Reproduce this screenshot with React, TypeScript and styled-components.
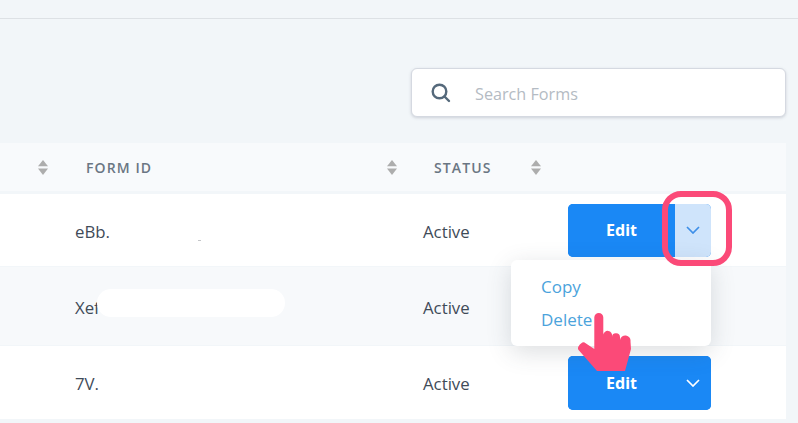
import React from "react";
import styled, { createGlobalStyle } from "styled-components";

const Global = createGlobalStyle`
  html, body { margin: 0; padding: 0; background: #f2f6f9; }
  body { font-family: "Open Sans", "Lato", sans-serif; }
  * { box-sizing: border-box; }
`;

const Page = styled.div`
  position: relative;
  width: 798px;
  height: 423px;
  overflow: hidden;
  background: #f2f6f9;
  display: flex;
  flex-direction: column;
`;

const TopBar = styled.header`
  height: 19px;
  flex: none;
  border-bottom: 1px solid #dde1e5;
`;

const Toolbar = styled.div`
  height: 124px;
  flex: none;
  display: flex;
  justify-content: flex-end;
  align-items: flex-start;
  padding: 49px 12px 0 0;
`;

const SearchBox = styled.label`
  width: 375px;
  height: 49px;
  display: flex;
  align-items: center;
  gap: 24px;
  padding-left: 19px;
  background: #fff;
  border: 1px solid #d5d9e1;
  border-radius: 6px;
  box-shadow: 0 1px 3px rgba(90, 100, 120, 0.25);
`;

const SearchText = styled.span`
  font-size: 16.2px;
  color: #b4bbc3;
  padding-top: 3px;
`;

const Table = styled.section`
  width: 786px;
  display: flex;
  flex-direction: column;
`;

const HeadRow = styled.div`
  height: 48px;
  margin-bottom: 3px;
  display: grid;
  grid-template-columns: 75px 348px 145px 1fr;
  align-items: center;
  background: #f8fafc;
`;

const HeadCell = styled.div<{ $end?: number }>`
  display: flex;
  align-items: center;
  justify-content: space-between;
  padding: 0 ${(p) => p.$end ?? 0}px 0 11px;
  font-size: 14px;
  font-weight: 600;
  letter-spacing: 1.1px;
  color: #6a7683;
`;

const FirstHeadCell = styled.div`
  display: flex;
  justify-content: flex-end;
  padding-right: 27px;
`;

const Row = styled.div<{ $h: number; $alt?: boolean }>`
  height: ${(p) => p.$h}px;
  display: grid;
  grid-template-columns: 75px 348px 145px 1fr;
  align-items: center;
  background: ${(p) => (p.$alt ? "#f7f9fb" : "#fff")};
  border-bottom: 1px solid #f2f6f9;
  font-size: 16.8px;
  color: #3f4b58;
`;

const CellText = styled.div`
  padding-top: 2px;
`;

const Speck = styled.span`
  display: inline-block;
  width: 3px;
  height: 1px;
  margin-left: 88px;
  vertical-align: -3px;
  background: #c4c6c9;
`;

const ButtonGroup = styled.div<{ $tall?: boolean }>`
  width: 143px;
  height: ${(p) => (p.$tall ? 54 : 53)}px;
  display: flex;
  border-radius: 5px;
  overflow: hidden;
  background: #1a88f5;
`;

const EditButton = styled.button`
  width: 107px;
  border: 0;
  padding: 0;
  background: #1a88f5;
  color: #fff;
  font-family: "Noto Sans", sans-serif;
  font-size: 16px;
  font-weight: 700;
`;

const CaretButton = styled.button<{ $open?: boolean }>`
  flex: 1;
  border: 0;
  padding: 0;
  display: flex;
  align-items: center;
  justify-content: center;
  background: ${(p) => (p.$open ? "#cfe4fb" : "#1a88f5")};
  color: ${(p) => (p.$open ? "#3e8fe8" : "#fff")};
`;

const Menu = styled.div`
  position: absolute;
  left: 511px;
  top: 260px;
  width: 200px;
  height: 86px;
  padding: 15px 0 0 30px;
  display: flex;
  flex-direction: column;
  gap: 9px;
  background: #fff;
  border-radius: 6px;
  box-shadow: 0 6px 24px rgba(60, 70, 85, 0.18);
`;

const MenuItem = styled.div`
  font-size: 17px;
  line-height: 24px;
  color: #4ba3dc;
`;

const Ring = styled.div`
  position: absolute;
  left: 662px;
  top: 191px;
  width: 70px;
  height: 75px;
  border: 6px solid #fb4a78;
  border-radius: 19px;
`;

const Redaction = styled.div`
  position: absolute;
  left: 97px;
  top: 289px;
  width: 188px;
  height: 28px;
  border-radius: 14px;
  background: #fff;
`;

const HandWrap = styled.div`
  position: absolute;
  left: 578px;
  top: 313px;
  width: 54px;
  height: 58px;
  line-height: 0;
`;

const Sort = () => (
  <svg width="10" height="15" viewBox="0 0 10 15" fill="#adadad">
    <path d="M5 0 10 6.3H0Z" />
    <path d="M0 8.5H10L5 15Z" />
  </svg>
);

const SearchIcon = () => (
  <svg width="20" height="20" viewBox="0 0 20 20" fill="none" stroke="#55697b" strokeWidth="2.4">
    <circle cx="8.500" cy="8.500" r="6.800" />
    <path d="M13.500 13.500 18 18" strokeLinecap="round" />
  </svg>
);

const Chevron = () => (
  <svg width="14" height="8" viewBox="0 0 14 8" fill="none" stroke="currentColor" strokeWidth="1.7">
    <path d="M1 1 7 7 13 1" />
  </svg>
);

const Hand = () => (
  <svg width="54" height="58" viewBox="0 0 54 58" fill="#fb4a78">
    <path d="M16.3 4.5a4.5 4.5 0 0 1 9 0V21.5a4.3 4.3 0 0 1 8.7 1.5v1.5a4 4 0 0 1 8-.5v3a5 5 0 0 1 10.5 1.500L53 36 47 58H19L1 37.500a3.500 3.500 0 0 1-.2-4.500c1.500-2 3.700-4.300 5.700-3.500L16.300 36Z" />
  </svg>
);

const Actions = ({ open, tall }: { open?: boolean; tall?: boolean }) => (
  <ButtonGroup $tall={tall}>
    <EditButton>Edit</EditButton>
    <CaretButton $open={open}>
      <Chevron />
    </CaretButton>
  </ButtonGroup>
);

const App = () => (
  <Page>
    <Global />
    <TopBar />
    <Toolbar>
      <SearchBox>
        <SearchIcon />
        <SearchText>Search Forms</SearchText>
      </SearchBox>
    </Toolbar>
    <Table>
      <HeadRow>
        <FirstHeadCell>
          <Sort />
        </FirstHeadCell>
        <HeadCell $end={26}>
          FORM ID
          <Sort />
        </HeadCell>
        <HeadCell $end={27}>
          STATUS
          <Sort />
        </HeadCell>
        <div />
      </HeadRow>
      <Row $h={73}>
        <div />
        <CellText>
          eBb.
          <Speck />
        </CellText>
        <CellText>Active</CellText>
        <Actions open />
      </Row>
      <Row $h={79} $alt>
        <div />
        <CellText>Xef</CellText>
        <CellText>Active</CellText>
        <Actions />
      </Row>
      <Row $h={74}>
        <div />
        <CellText>7V.</CellText>
        <CellText>Active</CellText>
        <Actions tall />
      </Row>
    </Table>
    <Redaction />
    <Menu>
      <MenuItem>Copy</MenuItem>
      <MenuItem>Delete</MenuItem>
    </Menu>
    <Ring />
    <HandWrap>
      <Hand />
    </HandWrap>
  </Page>
);

export default App;
